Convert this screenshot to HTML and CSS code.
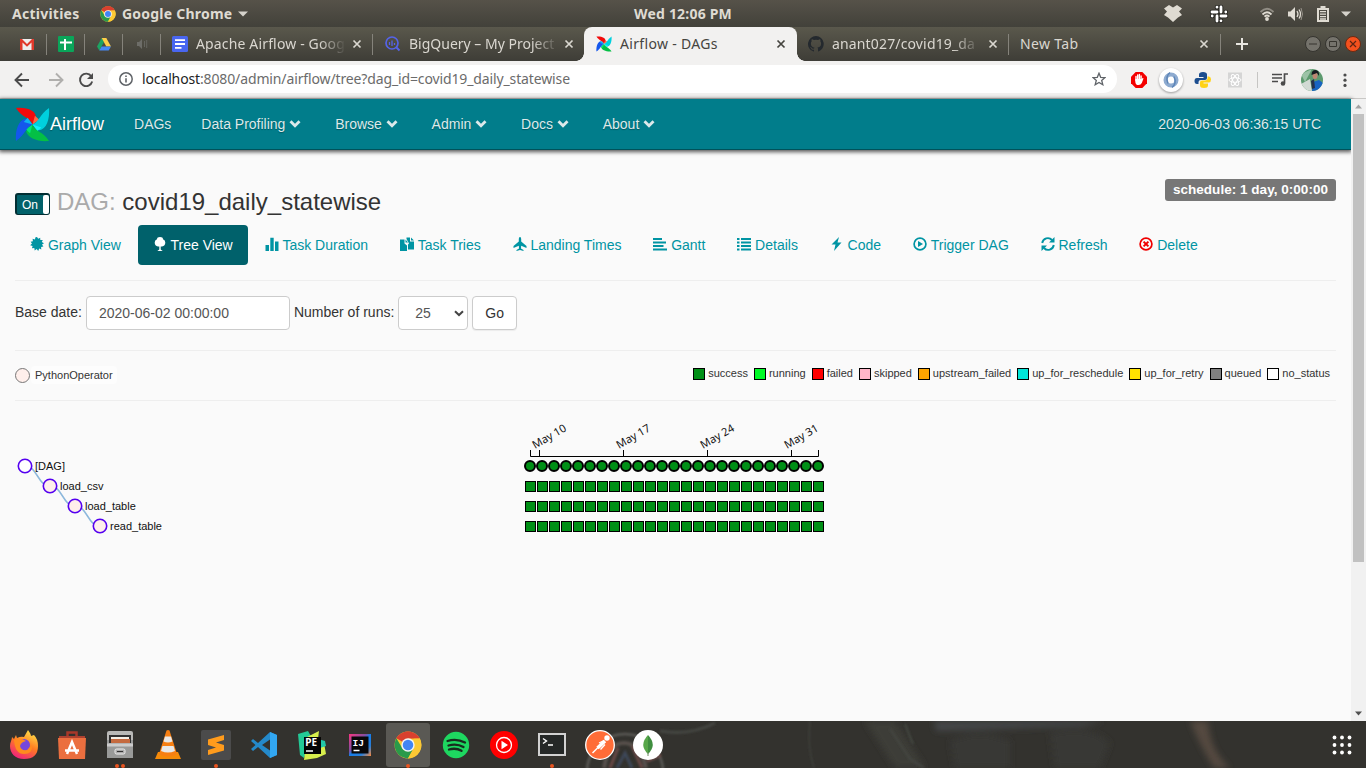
FILE: index.html
```
<!DOCTYPE html>
<html lang="en">
<head>
<meta charset="utf-8">
<title>Airflow - DAGs</title>
<link rel="stylesheet" href="styles.css">
</head>
<body>
<svg class="defs" width="0" height="0">
  <defs>
    <symbol id="chrome" viewBox="0 0 48 48">
      <circle cx="24" cy="24" r="23" fill="#fcc934"/>
      <path d="M24 24 4.1 12.5A23 23 0 0 1 43.9 12.5L24 13z" fill="#d9402f"/>
      <path d="M4.1 12.5A23 23 0 0 0 24 47L34 29.5 24 24 14.5 30z" fill="#2a9a4a"/>
      <path d="M43.9 12.5A23 23 0 0 1 24 47L33.5 29.5 34 13z" fill="#fcc934"/>
      <path d="M4.1 12.5A23 23 0 0 1 43.9 12.5H24z" fill="#d9402f"/>
      <circle cx="24" cy="24" r="11.5" fill="#f4f4f4"/><circle cx="24" cy="24" r="9" fill="#4285f4"/>
    </symbol>
    <symbol id="pinwheel" viewBox="0 0 36 36">
      <path d="M1 1C13 0 22 4 21.500 11L18 18C16 11 7 11 1 1z" fill="#f20a0a"/>
      <path d="M18 18 20.500 9 25 13z" fill="#ff6542"/>
      <path d="M35 1C36 13 32 23 25 24L18 18C25 15 25 8 35 1z" fill="#00d0de"/>
      <path d="M18 18 27 21 23 25z" fill="#15f0f8"/>
      <path d="M35 35C23 36 13 32 11.500 25L18 18C20 25 29 25 35 35z" fill="#04bf45"/>
      <path d="M18 18 15.500 27 11 23z" fill="#00e676"/>
      <path d="M1 35C0 23 4 13 11 12L18 18C11 21 11 28 1 35z" fill="#1457ec"/>
      <path d="M18 18 9 15.500 13 11z" fill="#0fb2f2"/>
    </symbol>
    <symbol id="x" viewBox="0 0 10 10"><path d="M1.5 1.5 8.5 8.5M8.5 1.5 1.5 8.5" stroke="currentColor" stroke-width="1.7"/></symbol>
    <symbol id="chev" viewBox="0 0 14 14"><path d="M1.500 5.2 3.500 3.200 7 6.700 10.500 3.200 12.500 5.200 7 10.800z" fill="currentColor"/></symbol>
  </defs>
</svg>

<header class="topbar">
  <span class="activities">Activities</span>
  <svg class="app-icon" width="16" height="16"><use href="#chrome"/></svg>
  <span class="app-name">Google Chrome</span>
  <svg class="app-caret" width="10" height="6"><path d="M0 .5h10L5 5.500z" fill="#d5d2cb"/></svg>
  <span class="clock">Wed 12:06 PM</span>
  <div class="tray">
    <svg width="18" height="17" viewBox="0 0 18 17"><path d="M5 0 9 2.500 13 0 18 3.500 15 6.500 18 10 14 12.500 9 17 4 12.500 0 10 3 6.500 0 3.500z" fill="#dfdbd2"/></svg>
    <svg class="slack" width="20" height="20" viewBox="0 0 20 20" stroke-linecap="round"><g stroke="#24231f" stroke-width="4.600"><path d="M3 8h5M8 3.200v0M12 3v5M16.800 8v0M12 12h5M12 16.800v0M8 12v5M3.200 12v0"/></g><g stroke="#fff" stroke-width="2.800"><path d="M3 8h5M8 3.200v.01M12 3v5M16.800 8v.01M12 12h5M12 16.800v.01M8 12v5M3.200 12v.01"/></g></svg>
    <svg class="wifi" width="16" height="14" viewBox="0 0 16 14" fill="none" stroke="#dfdbd2" stroke-width="1.800"><path d="M1.500 5Q8-1.500 14.500 5" opacity=".45"/><path d="M3.500 7.500Q8 3 12.500 7.500"/><path d="M5.500 9.700Q8 7.300 10.500 9.700"/><circle cx="8" cy="12" r="1" fill="#dfdbd2"/></svg>
    <svg class="vol" width="16" height="14" viewBox="0 0 16 14"><path d="M1 4.500h2.500L8 0v14L3.500 9.500H1z" fill="#dfdbd2"/><path d="M10 4q2 3 0 6M12 2.500q3 4.500 0 9" fill="none" stroke="#dfdbd2" stroke-width="1.300"/><path d="M14 1q3 6 0 12" fill="none" stroke="#99958d"/></svg>
    <svg class="bat" width="12" height="16" viewBox="0 0 12 16"><path d="M3.500 0h5v2H12v14H0V2h3.500zM2 4v10h8V4z" fill="#dfdbd2" fill-rule="evenodd"/><path d="M3 5.700h6M3 8.200h6M3 10.700h6M3 13h6" stroke="#dfdbd2" stroke-width="1.300"/></svg>
    <svg class="tcaret" width="10" height="6"><path d="M0 .5h10L5 5.500z" fill="#d5d2cb"/></svg>
  </div>
</header>

<div class="tabstrip">
  <div class="pin"><svg width="14" height="12" viewBox="0 0 14 12"><path d="M0 1h14v11H0z" fill="#eee"/><path d="M0 12V1h2l5 5 5-5h2v11h-2.500V4.500L7 8.800 2.500 4.500V12z" fill="#e0392b"/></svg></div>
  <div class="pin"><svg width="16" height="16"><rect width="16" height="16" rx="1" fill="#0aa55a"/><path d="M2 6.500h12M7 3v11" stroke="#fff" stroke-width="2"/></svg></div>
  <div class="pin"><svg width="14" height="13" viewBox="0 0 14 13"><path d="M4.700 0 0 8.500 2.300 12.500 7 4z" fill="#1da462"/><path d="M4.700 0h4.600L14 8.500H9.300z" fill="#ffcf48"/><path d="M4.600 8.500H14l-2.300 4H2.300z" fill="#4688f4"/></svg></div>
  <div class="pin"><svg width="11" height="10" viewBox="0 0 11 10"><path d="M0 3h2l3-3v10L2 7H0z" fill="#6d6d68"/><path d="M7.500 2v6M9.700 1v8" stroke="#65655f"/></svg></div>
  <div class="tab docs">
    <svg width="16" height="16"><rect width="16" height="16" rx="1.500" fill="#4966f0"/><path d="M3 4.200h10M3 8h10M3 11.800h6.500" stroke="#fff" stroke-width="1.800"/></svg>
    <span class="title t1">Apache Airflow - Goog</span><svg class="close" width="10" height="10"><use href="#x"/></svg>
  </div>
  <div class="tab bq">
    <svg width="16" height="16" viewBox="0 0 16 16" fill="none" stroke="#5563e8"><circle cx="7" cy="7" r="6" stroke-width="1.700"/><path d="M11.500 11.500 14.500 14.500" stroke-width="2"/><path d="M4.500 6v3M7 4.500V10M9.500 7v2" stroke-width="1.300"/></svg>
    <span class="title t2">BigQuery – My Project</span><svg class="close" width="10" height="10"><use href="#x"/></svg>
  </div>
  <div class="tab active">
    <svg width="16" height="16"><use href="#pinwheel"/></svg>
    <span class="title t3">Airflow - DAGs</span><svg class="close" width="10" height="10"><use href="#x"/></svg>
  </div>
  <div class="tab gh">
    <svg width="16" height="16" viewBox="0 0 16 16"><path d="M8 0a8 8 0 0 0-2.500 15.600c.4 0 .5-.2.500-.4v-1.500c-2.200.5-2.700-1-2.700-1-.4-.9-.9-1.200-.9-1.200-.7-.5.1-.5.100-.5.800.1 1.200.8 1.200.8.700 1.200 1.900.9 2.300.7.100-.5.300-.9.500-1.100-1.800-.2-3.600-.9-3.600-4 0-.9.300-1.600.8-2.100-.1-.2-.4-1 .1-2.100 0 0 .7-.2 2.200.8a7.500 7.500 0 0 1 4 0c1.500-1 2.200-.8 2.200-.8.400 1.100.2 1.900.1 2.100.5.500.8 1.200.8 2.100 0 3.100-1.900 3.700-3.700 3.900.3.300.6.800.6 1.500v2.300c0 .2.100.5.500.4A8 8 0 0 0 8 0z" fill="#24292e"/></svg>
    <span class="title t4">anant027/covid19_da</span><svg class="close" width="10" height="10"><use href="#x"/></svg>
  </div>
  <div class="tab newtab"><span class="title t5">New Tab</span><svg class="close" width="10" height="10"><use href="#x"/></svg></div>
  <svg class="plus" width="12" height="12"><path d="M6 0v12M0 6h12" stroke="#e8e6e0" stroke-width="2"/></svg>
  <div class="winctl">
    <svg width="18" height="18"><circle cx="9" cy="9" r="7.500" fill="#75736c" stroke="#35342f"/><path d="M5 9h8" stroke="#37352f"/></svg>
    <svg width="18" height="18"><circle cx="9" cy="9" r="7.500" fill="#75736c" stroke="#35342f"/><path d="M5.500 6.500h7v5h-7z" fill="none" stroke="#37352f"/></svg>
    <svg width="18" height="18"><circle cx="9" cy="9" r="7.500" fill="#f4511e" stroke="#6b2a12"/><path d="M6 6l6 6M12 6l-6 6" stroke="#5e2412" stroke-width="1.200"/></svg>
  </div>
</div>

<div class="toolbar">
  <svg class="back" width="16" height="16" viewBox="0 0 16 16" fill="none" stroke="#4b4b4b" stroke-width="1.900"><path d="M15 8H2M8 1.500 1.500 8 8 14.500"/></svg>
  <svg class="fwd" width="16" height="16" viewBox="0 0 16 16" fill="none" stroke="#b0afad" stroke-width="1.900"><path d="M1 8h13M8 1.500 14.500 8 8 14.500"/></svg>
  <svg class="reload" width="16" height="16" viewBox="0 0 16 16"><path d="M13.300 4.300A6.200 6.200 0 1 0 14.200 9.500" fill="none" stroke="#4b4b4b" stroke-width="1.900"/><path d="M15 1v6H9z" fill="#4b4b4b"/></svg>
  <div class="omnibox">
    <svg width="14" height="14" fill="none" stroke="#5f6368"><circle cx="7" cy="7" r="6.200" stroke-width="1.500"/><path d="M7 6.300v4.200M7 3.500v1.600" stroke-width="1.600"/></svg>
    <span class="url"><b>localhost</b>:8080/admin/airflow/tree?dag_id=covid19_daily_statewise</span>
    <svg class="star" width="14" height="14" viewBox="0 0 14 14"><path d="M7 1.200 8.700 5.300 13 5.600 9.700 8.400 10.800 12.700 7 10.400 3.200 12.700 4.300 8.400 1 5.600 5.300 5.300z" fill="none" stroke="#5f6368" stroke-width="1.300"/></svg>
  </div>
  <div class="exts">
    <svg width="32" height="24" viewBox="0 0 32 24"><path d="M12.700 4h6.600L24 8.700v6.600L19.300 20h-6.600L8 15.300V8.700z" fill="#f40000"/><path d="M13 12.500V8.500M14.700 12V7M16.400 12V6.500M18.100 12V8" stroke="#fff" stroke-width="1.400" stroke-linecap="round"/><path d="M12.300 11h6.500l1-1.200.7.700-1.700 4.500q-1 2-3.200 2-3.300 0-3.300-3.600z" fill="#fff"/></svg>
    <svg class="ext-on" width="32" height="28" viewBox="0 0 32 28"><circle cx="16" cy="14" r="12" fill="#fff"/><circle cx="16" cy="14" r="5.500" fill="none" stroke="#8eabd0" stroke-width="4"/><path d="M15 6.500q-5 4-2 11M17 21.500q5-4 2-11" stroke="#5e86b8" stroke-width="1.500" fill="none"/></svg>
    <svg width="32" height="24" viewBox="0 0 32 24"><path d="M16 4q-4 0-4 2.500V9h4.500v1H10q-2.500 0-2.500 3t2.500 3h1.500v-2q0-2 2.500-2h4q2 0 2-2V6.500Q20 4 16 4z" fill="#1c4e8f"/><path d="M17 20q4 0 4-2.500V15.500h-4.500v-1H22q2-.5 2-3T22 8.500h-1.500v2q0 2-2.500 2h-3q-2 0-2 2v3q0 2.500 4 2.500z" fill="#ffd215"/></svg>
    <svg width="32" height="24" viewBox="0 0 32 24"><path d="M9 4.500h14v15H9z" fill="#d5d5d5"/><g fill="none" stroke="#fff"><ellipse cx="16" cy="12" rx="6" ry="2.300"/><ellipse cx="16" cy="12" rx="6" ry="2.300" transform="rotate(60 16 12)"/><ellipse cx="16" cy="12" rx="6" ry="2.300" transform="rotate(120 16 12)"/></g></svg>
    <i class="ext-sep"></i>
    <svg class="queue" width="16" height="13" viewBox="0 0 16 13"><path d="M0 1.500h10M0 5h10M0 8.500h6M12.500 10V1h3.500" fill="none" stroke="#4b4b4b" stroke-width="1.700"/><circle cx="11" cy="10.500" r="2.300" fill="#4b4b4b"/></svg>
    <svg class="avatar" width="22" height="22" viewBox="0 0 22 22"><clipPath id="av"><circle cx="11" cy="11" r="11"/></clipPath><g clip-path="url(#av)"><path d="M0 0h22v22H0z" fill="#5d9a6e"/><path d="M0 5 11 0 4 13z" fill="#9cc2a6"/><path d="M0 15 9 10l2 12H0z" fill="#d2dad4"/><path d="M12 13 18 11l4 3v8H11z" fill="#1764c2"/><ellipse cx="14" cy="6.500" rx="2.500" ry="3.500" fill="#bd8772"/><path d="M10.500 6q0-5 4-5 4 0 3.500 6l-2-3z" fill="#171c20"/><path d="M10 12l3-2 1 9-3 1z" fill="#25324b"/></g></svg>
    <svg class="menu" width="4" height="16" fill="#4b4b4b"><circle cx="2" cy="3" r="1.600"/><circle cx="2" cy="8.200" r="1.600"/><circle cx="2" cy="13.400" r="1.600"/></svg>
  </div>
</div>

<div class="viewport">
  <div class="page">
    <nav class="navbar">
      <svg class="logo" width="35" height="35"><use href="#pinwheel"/></svg>
      <span class="brand">Airflow</span>
      <a>DAGs</a>
      <a>Data Profiling <svg width="14" height="14"><use href="#chev"/></svg></a>
      <a>Browse <svg width="14" height="14"><use href="#chev"/></svg></a>
      <a>Admin <svg width="14" height="14"><use href="#chev"/></svg></a>
      <a>Docs <svg width="14" height="14"><use href="#chev"/></svg></a>
      <a>About <svg width="14" height="14"><use href="#chev"/></svg></a>
      <span class="utc">2020-06-03 06:36:15 UTC</span>
    </nav>
    <main>
      <div class="heading">
        <div class="switch"><span>On</span><i></i></div>
        <h3><em>DAG:</em> covid19_daily_statewise</h3>
        <span class="schedule">schedule: 1 day, 0:00:00</span>
      </div>
      <div class="pills">
        <a><svg width="14" height="14" viewBox="0 0 14 14"><path d="M7 0 8.200 1.800 10.200.7 10.300 3 12.800 3 11.800 5 14 6.300 12 7.600 13.400 9.600 11.100 10 11.300 12.400 9.200 11.600 8.200 14 6.700 12.100 4.700 13.400 4.300 11 1.900 11.300 2.600 9.100.2 8.200 2 6.600.6 4.700 2.900 4.200 2.600 1.800 4.900 2.500 5.500.3z" fill="currentColor"/></svg> Graph View</a>
        <a class="on"><svg width="14" height="14" viewBox="0 0 14 14"><path d="M7 0Q10 0 10 2.300 12.300 3 12.300 5.500 12.300 9 9 9.500H7.700V12.500l2 1.500H4.300l2-1.500V9.500H5Q1.700 9 1.700 5.500 1.700 3 4 2.300 4 0 7 0z" fill="currentColor"/></svg> Tree View</a>
        <a><svg width="14" height="14" viewBox="0 0 14 14"><path d="M.5 8h3.500v6H.5zM5.300 0.800h3.400V14H5.300zM10 4.500h3.500V14H10z" fill="currentColor"/></svg> Task Duration</a>
        <a><svg width="14" height="14" viewBox="0 0 14 14"><path d="M0 2.500h4.500v4L7 8.500V14H0zM5.500 2.500 8 5.500H5.500zM6.500.5H10V4.500h4v8H8V7.500L9 6.500 6.500 2zM11 .500 14 3.500h-3z" fill="currentColor"/></svg> Task Tries</a>
        <a><svg width="14" height="14" viewBox="0 0 14 14"><path d="M7 0q1.200 0 1.200 2v2.500L13.500 9v2L8.200 8.700 8 11.500l2.500 1.500v1L7 13 3.500 14v-1L6 11.500l-.2-2.800L.5 11V9l5.300-4.500V2Q5.800 0 7 0z" fill="currentColor"/></svg> Landing Times</a>
        <a><svg width="14" height="14" viewBox="0 0 14 14"><path d="M0 2h9M0 5.500h13M0 9h10.500M0 12.500h14" stroke="currentColor" stroke-width="2.200"/></svg> Gantt</a>
        <a><svg width="14" height="14" viewBox="0 0 14 14"><path d="M0 2h2.500M0 5.500h2.500M0 9h2.500M0 12.500h2.500M4 2h10M4 5.500h10M4 9h10M4 12.500h10" stroke="currentColor" stroke-width="2.200"/></svg> Details</a>
        <a><svg width="14" height="14" viewBox="0 0 14 14"><path d="M9 0 1.500 7.500H5.500L4 14 11.500 5.500H7.500z" fill="currentColor"/></svg> Code</a>
        <a><svg width="14" height="14" viewBox="0 0 14 14"><circle cx="7" cy="7" r="5.900" fill="none" stroke="currentColor" stroke-width="1.700"/><path d="M5 4 10 7 5 10z" fill="currentColor"/></svg> Trigger DAG</a>
        <a><svg width="14" height="14" viewBox="0 0 14 14"><path d="M1.200 6A5.700 5.700 0 0 1 11 3M12.800 8A5.700 5.700 0 0 1 3 11" fill="none" stroke="currentColor" stroke-width="1.900"/><path d="M13.500 0v5.500H8zM.5 14V8.500H6z" fill="currentColor"/></svg> Refresh</a>
        <a><svg class="red" width="14" height="14" viewBox="0 0 14 14"><circle cx="7" cy="7" r="5.900" fill="none" stroke="currentColor" stroke-width="1.700"/><path d="M4.600 4.600 9.400 9.400M9.400 4.600 4.600 9.400" stroke="currentColor" stroke-width="2"/></svg> Delete</a>
      </div>
      <form class="filters">
        <label>Base date:</label><span class="input">2020-06-02 00:00:00</span>
        <label>Number of runs:</label><span class="input select">25<svg width="10" height="7"><path d="M1 1.200 5 5 9 1.200" fill="none" stroke="#444" stroke-width="2"/></svg></span><span class="btn">Go</span>
      </form>
      <div class="legend">
        <i class="dot"></i><span class="op">PythonOperator</span>
        <div class="states">
          <span><i class="s-success"></i>success</span><span><i class="s-running"></i>running</span><span><i class="s-failed"></i>failed</span><span><i class="s-skipped"></i>skipped</span><span><i class="s-upf"></i>upstream_failed</span><span><i class="s-resch"></i>up_for_reschedule</span><span><i class="s-retry"></i>up_for_retry</span><span><i class="s-queued"></i>queued</span><span><i class="s-none"></i>no_status</span>
        </div>
      </div>
      <svg class="tree" width="1321" height="150" viewBox="15 401 1321 150">
        <g fill="none" stroke="#8cb8dc" stroke-width="1.500"><path d="M25 466C37.500 466 37.500 486 50 486M50 486C62.500 486 62.500 506 75 506M75 506C87.500 506 87.500 526 100 526"/></g>
        <g stroke="#5500f0" stroke-width="1.600" fill="#ffefeb"><circle cx="25" cy="466" r="6.700" fill="#fff"/><circle cx="50" cy="486" r="6.700"/><circle cx="75" cy="506" r="6.700"/><circle cx="100" cy="526" r="6.700"/></g>
        <g class="names"><text x="35" y="470">[DAG]</text><text x="60" y="490">load_csv</text><text x="85" y="510">load_table</text><text x="110" y="530">read_table</text></g>
        <path d="M530.500 450V456.500H818.500V450M539.500 450v6M623.500 450v6M707.500 450v6M791.500 450v6" fill="none" stroke="#000"/>
        <g class="dates"><text transform="translate(535 449) rotate(-30)">May 10</text><text transform="translate(619 449) rotate(-30)">May 17</text><text transform="translate(703 449) rotate(-30)">May 24</text><text transform="translate(787 449) rotate(-30)">May 31</text></g>
        <g id="runs"></g>
      </svg>
    </main>
  </div>
  <div class="scrollbar"><svg width="15" height="15"><path d="M4 9.500h7L7.500 5.500z" fill="#a3a3a3"/></svg><i></i><svg class="down" width="15" height="15"><path d="M4 5.500h7l-3.500 4z" fill="#505050"/></svg></div>
</div>

<footer class="dock">
  <svg class="wall" width="1366" height="47" viewBox="0 0 1366 47">
    <defs><filter id="b"><feGaussianBlur stdDeviation="3"/></filter><filter id="b1"><feGaussianBlur stdDeviation="1"/></filter></defs>
    <g filter="url(#b)"><path d="M934 0h170l-20 5-148 5z" fill="#444648"/><path d="M1190 0h18q2 30 22 47h-16q-14-22-24-47z" fill="#544a3f"/><path d="M950 20q30-15 60 0v27h-55zM1050 12q40-10 60 10l-10 25h-45z" fill="#393935"/><path d="M865 0h30l30 47h-30z" fill="#3c3d39"/></g>
    <g filter="url(#b1)" fill="none"><path d="M660 10q30 5 55-8" stroke="#454642" stroke-width="3"/><path d="M810 0q-3 25 4 47" stroke="#444641"/><circle cx="625" cy="51" r="38" stroke="#5a5955" stroke-width="2.500"/><path d="M604 47q4-25 20-25t22 25" stroke="#56504b" stroke-width="4"/><path d="M610 47l8-20M632 25l10 22M647 40l14-6" stroke="#6b4a46" stroke-width="3"/><path d="M617 47l8-15 7 15M640 20l8 12" stroke="#3e4759" stroke-width="3"/><path d="M890 8l20 30 14 9M905 3l8 20" stroke="#454743" stroke-width="2"/></g>
  </svg>
  <div class="apps">
    <div><svg width="30" height="30" viewBox="0 0 30 30"><defs><linearGradient id="ff" x1=".8" y1="0" x2=".3" y2="1"><stop offset="0" stop-color="#ffe94b"/><stop offset=".5" stop-color="#ff7b22"/><stop offset="1" stop-color="#f0217c"/></linearGradient></defs><path d="M15 29C6 29 1 23 1 16c0-4 2-6 2-9l2 2 2-4 1 3q4-2 7-1l4-7q3 4 3 6l3-1q4 4 4 11 0 13-14 13z" fill="url(#ff)"/><circle cx="15" cy="15" r="6" fill="#7747dc"/><path d="M5 10q6-3 12 1-5 1-6 5 1 5 7 4l5-5q1 9-8 9-9 0-10-14z" fill="#ff8b1e"/></svg></div>
    <div><svg width="28" height="28" viewBox="0 0 28 28"><path d="M9.500 7V1.500h9V7" fill="none" stroke="#a9382a" stroke-width="2.500"/><path d="M1 5h26v2H1z" fill="#ad4130"/><path d="M0 7h28l-1 21H1z" fill="#eb6f3f"/><path d="M9 23 14 11l5 12M7 19.500h14" stroke="#fff" stroke-width="2.500" fill="none"/></svg></div>
    <div class="r2"><svg width="28" height="28" viewBox="0 0 28 28"><rect x="1" width="26" height="27" rx="2" fill="#b9b9b7"/><path d="M1 9h26v18H1z" fill="#999a99"/><path d="M3 4h22v8H3z" fill="#323232"/><path d="M5 6h18v2H5z" fill="#f5efe6"/><path d="M5 8h19v4H5z" fill="#c56a3f"/><path d="M1 14h26" stroke="#ccc" stroke-width="3"/><rect x="9" y="18" width="10" height="5" rx="1.500" fill="#aaa" stroke="#eee"/><path d="M11 20.500h6" stroke="#333"/></svg></div>
    <div><svg width="28" height="30" viewBox="0 0 28 30"><path d="M4 22h20l3 7H1z" fill="#f58a08"/><path d="M14 0q2 0 2 2l7 22q-9 5-18 0L12 2q0-2 2-2z" fill="#f77f12"/><path d="M11 6.500h6l1.500 5q-4.500 2-9 0zM8.500 16h11l1.500 5q-7 3-14 0z" fill="#e8e8e8"/></svg></div>
    <div class="r1"><svg width="30" height="30" viewBox="0 0 30 30"><rect width="30" height="30" rx="2" fill="#4b4b4b"/><path d="M7 9.500 23 5v5L15 12.500 23 15v5.500L7 25v-5l8-2.500-8-2.500z" fill="#ff9b1c"/></svg></div>
    <div><svg width="28" height="28" viewBox="0 0 28 28"><path d="M20 1l7 3v20l-7 3L8 16l-5 4-2-2 4.500-4L1 10l2-2 5 4zM20 8.500 12 14l8 5.500z" fill="#2489ca" fill-rule="evenodd"/><path d="M20 1l7 3v20l-7 3z" fill="#32a7f2"/></svg></div>
    <div><svg width="30" height="30" viewBox="0 0 30 30"><path d="M1 4 11 1 15 8 7 28 3 25z" fill="#23c996"/><path d="M10 7 22 1l-1 8 6 4 2 11-9 4-13 2z" fill="#d7ee4c"/><path d="M21 9l7 2 1 5-6 2z" fill="#22c8a8"/><path d="M7 7h17v17H7z" fill="#050505"/><text class="ide" x="8.300" y="15.800">PE</text><path d="M9 21h7" stroke="#fff" stroke-width="1.500"/></svg></div>
    <div><svg width="24" height="24" viewBox="0 0 24 24"><defs><linearGradient id="ij" x2="1" y2="1"><stop stop-color="#fa347f"/><stop offset=".4" stop-color="#8050a0"/><stop offset=".5" stop-color="#167eea"/><stop offset=".75" stop-color="#277ed8"/><stop offset="1" stop-color="#ff893a"/></linearGradient></defs><path d="M1 1h22v22H1z" fill="url(#ij)"/><path d="M3.500 3.500h17v17h-17z" fill="#08080a"/><text class="ij" x="4.500" y="12.500">IJ</text><path d="M5.500 17.500h6" stroke="#fff" stroke-width="1.500"/></svg></div>
    <div class="sel r1"><svg width="28" height="28"><use href="#chrome"/></svg></div>
    <div><svg width="28" height="28" viewBox="0 0 28 28"><circle cx="14" cy="14" r="13.200" fill="#1ed760"/><path d="M5.500 10q9-3 17.500 1.500M6.500 14.500q8-2.500 15 1.500M7 18.500q7-2 12.500 1.300" fill="none" stroke="#182c1e" stroke-width="2.300" stroke-linecap="round"/></svg></div>
    <div><svg width="28" height="28" viewBox="0 0 28 28"><circle cx="14" cy="14" r="14" fill="#f00"/><circle cx="14" cy="14" r="7.500" fill="none" stroke="#fff" stroke-width="1.300"/><path d="M11.500 9.700 18 14l-6.500 4.300z" fill="#fff"/></svg></div>
    <div class="r1"><svg class="term" width="28" height="23" viewBox="0 0 28 23"><path d="M0 0h28v23H0z" fill="#d2d2d2"/><path d="M2 2h24v19H2z" fill="#252827"/><path d="M5 5.500 8.500 8 5 10.500M10 12h5" fill="none" stroke="#fff" stroke-width="1.400"/></svg></div>
    <div><svg width="30" height="30" viewBox="0 0 30 30"><circle cx="15" cy="15" r="14.300" fill="#ff6c37" stroke="#fff" stroke-width="1.300"/><circle cx="22" cy="8" r="2.700" fill="#fff"/><path d="M7.500 23 14 16.500" stroke="#fff" stroke-width="1.500"/><path d="M12.500 18 20 11" stroke="#fff" stroke-width="3.500"/><path d="M14 13l5-2.500M15.500 19.500l4.500-5" stroke="#fff" stroke-width="1.300"/></svg></div>
    <div><svg width="30" height="30" viewBox="0 0 30 30"><circle cx="15" cy="15" r="15" fill="#fff"/><path d="M15 5Q5.500 15 15 24z" fill="#58a74a"/><path d="M15 5q9.500 10 0 19z" fill="#3f8e3f"/><path d="M15 22v4" stroke="#6b8a60"/></svg></div>
  </div>
  <svg class="grid" width="20" height="20" fill="#fff"><circle cx="2.500" cy="2.500" r="1.900"/><circle cx="10" cy="2.500" r="1.900"/><circle cx="17.500" cy="2.500" r="1.900"/><circle cx="2.500" cy="10" r="1.900"/><circle cx="10" cy="10" r="1.900"/><circle cx="17.500" cy="10" r="1.900"/><circle cx="2.500" cy="17.500" r="1.900"/><circle cx="10" cy="17.500" r="1.900"/><circle cx="17.500" cy="17.500" r="1.900"/></svg>
</footer>
<script src="runs.js"></script>
</body>
</html>
```
FILE: styles.css
```
* { box-sizing: border-box; }
body { margin: 0; width: 1366px; height: 768px; overflow: hidden; display: flex; flex-direction: column; background: #fafafa; font: 14px/20px "Liberation Sans", Arial, sans-serif; color: #333; }
svg { flex: none; display: block; }
.defs { position: absolute; }

.topbar { height: 27px; flex: none; display: grid; grid-template-columns: 100px 22px 116px 10px 1fr auto; align-items: center; background: linear-gradient(#565249, #42413a); color: #dfdbd2; font: bold 14px/27px "Noto Sans", sans-serif; white-space: nowrap; }
.activities { padding-left: 12px; letter-spacing: .25px; }
.app-name { letter-spacing: .22px; }
.clock { padding-left: 386px; letter-spacing: .2px; }
.tray { display: flex; align-items: center; padding-right: 15px; }
.slack { margin-left: 27px; }
.wifi { margin-left: 30px; }
.vol { margin-left: 12px; }
.bat { margin-left: 14px; }
.tcaret { margin-left: 12px; }

.tabstrip { height: 34px; flex: none; display: flex; align-items: stretch; background: linear-gradient(#5a584c, #3e3d37); color: #dad7d0; font: 14px/34px "Noto Sans", sans-serif; }
.pin { width: 38px; display: flex; align-items: center; justify-content: center; position: relative; }
.pin:first-child { width: 47px; padding-left: 7px; }
.pin::after, .docs::after, .gh::after, .newtab::after { content: ""; position: absolute; right: 0; top: 7px; width: 1px; height: 21px; background: #85837b; }
.tab { display: flex; align-items: center; position: relative; padding-left: 11px; }
.title { margin-left: 8px; white-space: nowrap; letter-spacing: .15px; }
.t1, .t2, .t4 { -webkit-mask: linear-gradient(90deg, #000 82%, transparent); mask: linear-gradient(90deg, #000 82%, transparent); }
.t2 { letter-spacing: 0; }
.t3, .t5 { letter-spacing: .33px; }
.close { margin-left: auto; margin-right: 11px; }
.docs { width: 212px; } .docs .title { width: 150px; }
.bq { width: 211px; padding-left: 12px; } .bq .title { width: 150px; } .bq .close { margin-right: 10px; }
.active { width: 213px; padding-left: 12px; background: #f2f1f0; color: #45443f; border-radius: 8px 8px 0 0; }
.active::before, .active::after { content: ""; position: absolute; bottom: 0; width: 8px; height: 8px; }
.active::before { left: -8px; background: radial-gradient(circle at 0 0, transparent 7.500px, #f2f1f0 8px); }
.active::after { right: -8px; background: radial-gradient(circle at 100% 0, transparent 7.500px, #f2f1f0 8px); }
.gh { width: 212px; } .gh .title { width: 148px; }
.newtab { width: 212px; padding-left: 3px; } .newtab .close { margin-right: 12px; }
.plus { margin: 11px 0 0 15px; }
.winctl { display: flex; gap: 2px; margin-left: auto; padding-right: 4px; align-items: center; }

.toolbar { height: 38px; flex: none; display: flex; align-items: center; background: #f2f1f0; border-bottom: 1px solid #c9c8c6; padding-left: 14px; }
.fwd { margin-left: 18px; }
.reload { margin: 0 14px; }
.omnibox { width: 1009px; height: 28px; border-radius: 14px; background: #fff; display: flex; align-items: center; padding: 0 11px; margin-bottom: 1px; }
.url { margin-left: 9px; font: 14px/28px "Noto Sans", sans-serif; color: #6b6b6b; letter-spacing: -.13px; white-space: nowrap; }
.url b { font-weight: 400; color: #222; }
.star { margin-left: auto; }
.exts { display: flex; align-items: center; padding-left: 6px; }
.ext-on { filter: drop-shadow(0 1px 1px #999); }
.ext-sep { width: 1px; height: 16px; background: #c6c5c3; margin-left: 6px; }
.queue { margin-left: 14px; }
.avatar { margin-left: 13px; }
.menu { margin-left: 20px; }

.viewport { flex: 1; min-height: 0; display: flex; }
.page { width: 1351px; }
.navbar { height: 51px; display: flex; align-items: center; padding: 0 30px 0 15px; background: #017d8b; border-bottom: 1px solid #00525b; box-shadow: 0 1px 4px 1px rgba(0,0,0,.65); color: #dce9ea; text-shadow: 0 1px 1px rgba(0,0,0,.3); }
.brand { font-size: 18px; color: #fff; margin-right: 15px; }
.navbar a { display: flex; align-items: center; gap: 3px; padding: 0 15px; }
.navbar a:nth-of-type(n+2) { margin-right: 2.750px; }
.utc { margin-left: auto; }

main { padding: 0 15px; }
.heading { height: 75px; display: flex; align-items: flex-start; padding-top: 29px; }
.switch { width: 35px; height: 22px; margin-top: 14px; display: flex; background: #02616a; border: 2px solid #022e33; border-width: 2px 1px 1px 2px; border-radius: 3px; color: #fff; font-size: 12px; }
.switch span { width: 26px; padding-left: 5px; line-height: 20px; }
.switch i { flex: 1; background: #fff; border-radius: 2px; }
h3 { margin: 10px 0 0 7px; font: 24px/26px "Liberation Sans", Arial, sans-serif; }
h3 em { font-style: normal; color: #aaa; }
.schedule { margin-left: auto; height: 22px; padding: 0 8px; border-radius: 3px; background: #777; color: #fff; font-weight: bold; font-size: 13.500px; letter-spacing: .03px; line-height: 21px; }
.pills { display: flex; gap: 1.800px; height: 56px; border-bottom: 1px solid #eee; color: #0094a3; }
.pills a { height: 40px; padding: 0 15px; display: flex; align-items: center; gap: 3.900px; border-radius: 4px; white-space: nowrap; }
.pills .on { background: #00616b; color: #fff; }
.pills svg { position: relative; top: -1px; }
.red { color: #f00000; }
.filters { height: 70px; border-bottom: 1px solid #eee; padding-top: 15px; display: flex; align-items: flex-start; gap: 4px; margin: 0; }
.filters label { line-height: 32px; }
.input, .btn { height: 34px; border: 1px solid #ccc; border-radius: 4px; background: #fff; color: #555; padding: 0 12px; line-height: 33px; }
.input { width: 204px; }
.select { width: 70px; padding-left: 16px; display: flex; align-items: center; }
.select svg { margin-left: auto; margin-right: -9px; }
.btn { width: 45px; color: #333; box-shadow: 0 1px 1px rgba(0,0,0,.06); }
.legend { height: 50px; border-bottom: 1px solid #eee; display: flex; align-items: flex-start; font-size: 11px; padding-right: 6px; }
.dot { width: 15px; height: 15px; border: 1px solid #777; border-radius: 50%; background: #ffefeb; margin-top: 17px; }
.op { margin: 15px 0 0 1px; padding: 0 4px; line-height: 18px; border-radius: 4px; background: #fdfdfd; }
.states { margin: 12px 0 0 auto; display: flex; gap: 6px; }
.states span { display: flex; line-height: 20px; }
.states i { width: 12px; height: 12px; border: 1px solid #000; margin: 5px 3px 0 0; }
.s-success { background: #008f16; } .s-running { background: #01fb27; } .s-failed { background: #f00; } .s-skipped { background: #ffb6c8; } .s-upf { background: #ffa500; } .s-resch { background: #00e5d8; } .s-retry { background: #ffe300; } .s-queued { background: #808080; } .s-none { background: #fff; }
.names { font: 11px "Liberation Sans", sans-serif; fill: #111; }
.dates { font: 11px "Noto Sans", sans-serif; fill: #111; }
.scrollbar { width: 15px; background: #f1f1f1; display: flex; flex-direction: column; }
.scrollbar i { height: 448px; margin: 0 2px; background: #c1c1c1; }
.down { margin-top: auto; }

.dock { height: 47px; flex: none; position: relative; display: flex; align-items: center; justify-content: space-between; background: #33322e; padding-right: 14px; }
.wall { position: absolute; left: 0; top: 0; }
.apps { display: flex; gap: 4px; padding-left: 2px; position: relative; }
.apps div { width: 44px; height: 44px; display: flex; align-items: center; justify-content: center; position: relative; }
.sel { background: #5a5954; border-radius: 3px; }
.grid { position: relative; }
.r1::after, .r2::after { content: ""; position: absolute; bottom: -1px; left: 20px; width: 4px; height: 4px; border-radius: 50%; background: #e95420; }
.r2::after { left: 17px; box-shadow: 6px 0 #e95420; }
.ide { font: bold 10px "Noto Sans", sans-serif; fill: #fff; }
.ij { font: bold 9.500px "Liberation Mono", monospace; fill: #fff; }
```
FILE: runs.js
```
// Draws 25 runs: one circle per DAG run, one square per task instance.
const ns = "http://www.w3.org/2000/svg";
const runs = document.getElementById("runs");
function add(name, attrs) {
  const el = document.createElementNS(ns, name);
  for (const key in attrs) el.setAttribute(key, attrs[key]);
  runs.appendChild(el);
}
for (let i = 0; i < 25; i++) {
  add("circle", { cx: 530 + 12 * i, cy: 466, r: 5, fill: "#008f16", stroke: "#000", "stroke-width": 2 });
  for (const y of [481.5, 501.5, 521.5]) {
    add("rect", { x: 525.5 + 12 * i, y: y, width: 10, height: 10, fill: "#008f16", stroke: "#000" });
  }
}
```
